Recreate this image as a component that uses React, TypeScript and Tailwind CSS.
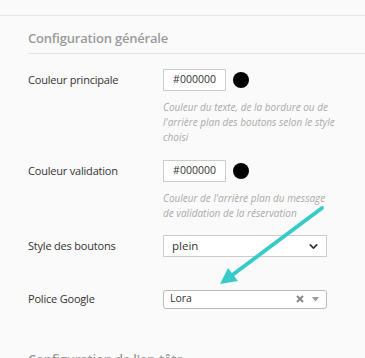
import { ChevronDown } from 'lucide-react';

// Settings panel — "Configuration générale" block with an annotation arrow.

function Label({ children }: { children: React.ReactNode }) {
  return (
    <div className="w-[135px] flex-shrink-0 text-[11px] tracking-[-0.2px] leading-[22px] text-[#333]">{children}</div>
  );
}

function ColorField({ help }: { help: string }) {
  return (
    <div>
      <div className="flex items-center gap-[7px]">
        <div className="w-[63px] h-[22px] border border-[#ccc] bg-white flex items-center justify-center text-[10.5px] text-[#333]">
          #000000
        </div>
        <span className="w-[16px] h-[16px] rounded-full bg-black" />
      </div>
      <p className="mt-[9px] w-[174px] text-[10px] italic leading-[15px] text-[#aaa]">{help}</p>
    </div>
  );
}

export default function App() {
  return (
    <div
      className="relative w-[365px] h-[358px] overflow-hidden bg-[#fafafa] pt-[15px]"
      style={{ fontFamily: '"Open Sans", "Liberation Sans", sans-serif' }}
    >
      <div className="border-t border-[#e6e6e6] pl-[28px]">
        <h2 className="mt-[12px] pb-[5px] border-b border-[#e3e3e3] text-[13px] tracking-[-0.2px] leading-[20px] text-[#9a9a9a] font-semibold">
          Configuration générale
        </h2>

        <div className="mt-[15px] flex items-start">
          <Label>Couleur principale</Label>
          <ColorField help="Couleur du texte, de la bordure ou de l'arrière plan des boutons selon le style choisi" />
        </div>

        <div className="mt-[15px] flex items-start">
          <Label>Couleur validation</Label>
          <ColorField help="Couleur de l'arrière plan du message de validation de la réservation" />
        </div>

        <div className="mt-[14px] flex items-start">
          <Label>Style des boutons</Label>
          <div className="w-[164px] h-[22px] border border-[#ccc] bg-white flex items-center justify-between pl-[8px] pr-[6px] text-[11.5px] text-[#333]">
            <span>plein</span>
            <ChevronDown className="w-[13px] h-[13px] text-[#333]" strokeWidth={3} />
          </div>
        </div>

        <div className="mt-[31px] flex items-center">
          <Label>Police Google</Label>
          <div className="w-[164px] h-[19px] border border-[#bbb] rounded-[3px] bg-white flex items-center pl-[6px] pr-[7px] text-[10.5px] text-[#333]">
            <span className="flex-1">Lora</span>
            <svg width="8" height="8" viewBox="0 0 8 8" className="text-[#888]">
              <path d="M1 1L7 7M7 1L1 7" stroke="currentColor" strokeWidth="2" />
            </svg>
            <svg width="7" height="5" viewBox="0 0 7 5" className="ml-[8px] text-[#999]">
              <path d="M0 0H7L3.5 4.5Z" fill="currentColor" />
            </svg>
          </div>
        </div>

        <h2 className="mt-[39px] text-[13px] tracking-[-0.2px] leading-[20px] text-[#9a9a9a] font-semibold">
          Configuration de l'en-tête
        </h2>
      </div>

      {/* Annotation arrow pointing at the Google font picker */}
      <svg className="absolute left-0 top-0 pointer-events-none" width="365" height="358">
        <line x1="322" y1="208" x2="231" y2="276" stroke="#36cbc8" strokeWidth="4" strokeLinecap="round" />
        <polygon points="220,284 228,268 238,281" fill="#36cbc8" />
      </svg>
    </div>
  );
}
